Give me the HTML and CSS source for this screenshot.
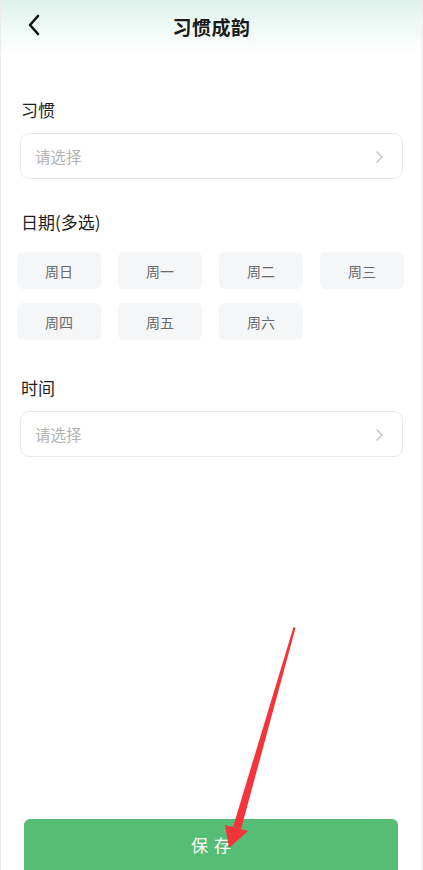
FILE: index.html
```html
<!DOCTYPE html>
<html lang="zh">
<head>
<meta charset="utf-8">
<title>习惯成韵</title>
<link rel="stylesheet" href="styles.css">
</head>
<body>
<div class="page">
  <header class="topbar">
    <svg class="back" width="14" height="22" viewBox="0 0 14 22"><path d="M11 2 L3 11 L11 20" fill="none" stroke="#111" stroke-width="2.6" stroke-linecap="round" stroke-linejoin="round"/></svg>
    <h1 class="title">习惯成韵</h1>
  </header>

  <main class="form">
    <section class="field field-habit">
      <div class="label">习惯</div>
      <div class="select">
        <span class="placeholder">请选择</span>
        <svg class="chev" width="9" height="14" viewBox="0 0 9 14"><path d="M2 2 L7 7 L2 12" fill="none" stroke="#b9bdc7" stroke-width="1.3" stroke-linecap="round" stroke-linejoin="round"/></svg>
      </div>
    </section>

    <section class="field field-days">
      <div class="label">日期(多选)</div>
      <div class="days">
        <div class="day">周日</div>
        <div class="day">周一</div>
        <div class="day">周二</div>
        <div class="day">周三</div>
        <div class="day">周四</div>
        <div class="day">周五</div>
        <div class="day">周六</div>
      </div>
    </section>

    <section class="field field-time">
      <div class="label">时间</div>
      <div class="select">
        <span class="placeholder">请选择</span>
        <svg class="chev" width="9" height="14" viewBox="0 0 9 14"><path d="M2 2 L7 7 L2 12" fill="none" stroke="#b9bdc7" stroke-width="1.3" stroke-linecap="round" stroke-linejoin="round"/></svg>
      </div>
    </section>
  </main>

  <footer class="bottom">
    <button class="save">保存</button>
  </footer>

  <svg class="arrow" width="423" height="870" viewBox="0 0 423 870">
    <polygon points="292.5,627 294.5,628 240,829 232,827" fill="#f5333a"/>
    <polygon points="224,825 247,831 228,848" fill="#f5333a"/>
  </svg>
</div>
</body>
</html>
```

FILE: styles.css
```css
* { box-sizing: border-box; margin: 0; padding: 0; }
html, body { width: 423px; height: 870px; overflow: hidden; background: #fff; }
body {
  font-family: "Noto Sans CJK SC", "Noto Sans", sans-serif;
  color: #1f1f1f;
}
.page {
  position: relative;
  width: 423px;
  height: 870px;
  display: flex;
  flex-direction: column;
  border-left: 1px solid #ececec;
  border-right: 1px solid #ececec;
  overflow: hidden;
}
.topbar {
  height: 54px;
  display: flex;
  align-items: center;
  justify-content: center;
  position: relative;
  background: linear-gradient(to bottom, #dcf2ea 0%, #eef9f5 45%, #ffffff 100%);
}
.back {
  position: absolute;
  left: 26px;
  top: 14px;
}
.title {
  font-size: 19px;
  font-weight: 600;
  color: #1a1a1a;
  margin-top: -2px;
  letter-spacing: 0.5px;
}
.form {
  flex: 1;
  display: flex;
  flex-direction: column;
  padding: 0 19px 0 19px;
}
.label {
  font-size: 17px;
  line-height: 24px;
  color: #1f1f1f;
  padding-left: 1px;
}
.field-habit { margin-top: 44px; }
.field-habit .label { margin-bottom: 11px; }
.field-days { margin-top: 31px; }
.field-days .label { margin-bottom: 18px; }
.field-time { margin-top: 36px; }
.field-time .label { margin-bottom: 11px; }
.select {
  height: 46px;
  border: 1px solid #e6e7ea;
  border-radius: 9px;
  display: flex;
  align-items: center;
  justify-content: space-between;
  padding: 0 18px 0 14px;
}
.placeholder {
  font-size: 15.5px;
  color: #b3b3b3;
}
.chev { margin-top: 1px; }
.days {
  display: grid;
  grid-template-columns: repeat(4, 84px);
  column-gap: 17px;
  row-gap: 14px;
  margin-left: -3px;
}
.day {
  height: 37px;
  border-radius: 6px;
  background: #f4f6f8;
  display: flex;
  align-items: center;
  justify-content: center;
  font-size: 14px;
  color: #6a6a6a;
}
.bottom {
  padding: 0 24px 0 23px;
  height: 51px;
}
.save {
  width: 100%;
  height: 56px;
  border: none;
  border-radius: 6px;
  background: #55bd74;
  color: #fff;
  font-family: "Noto Sans CJK SC", "Noto Sans", sans-serif;
  font-size: 17px;
  letter-spacing: 6px;
  padding: 0 0 5px 6px;
}
.arrow {
  position: absolute;
  left: 0;
  top: 0;
  pointer-events: none;
}
```
